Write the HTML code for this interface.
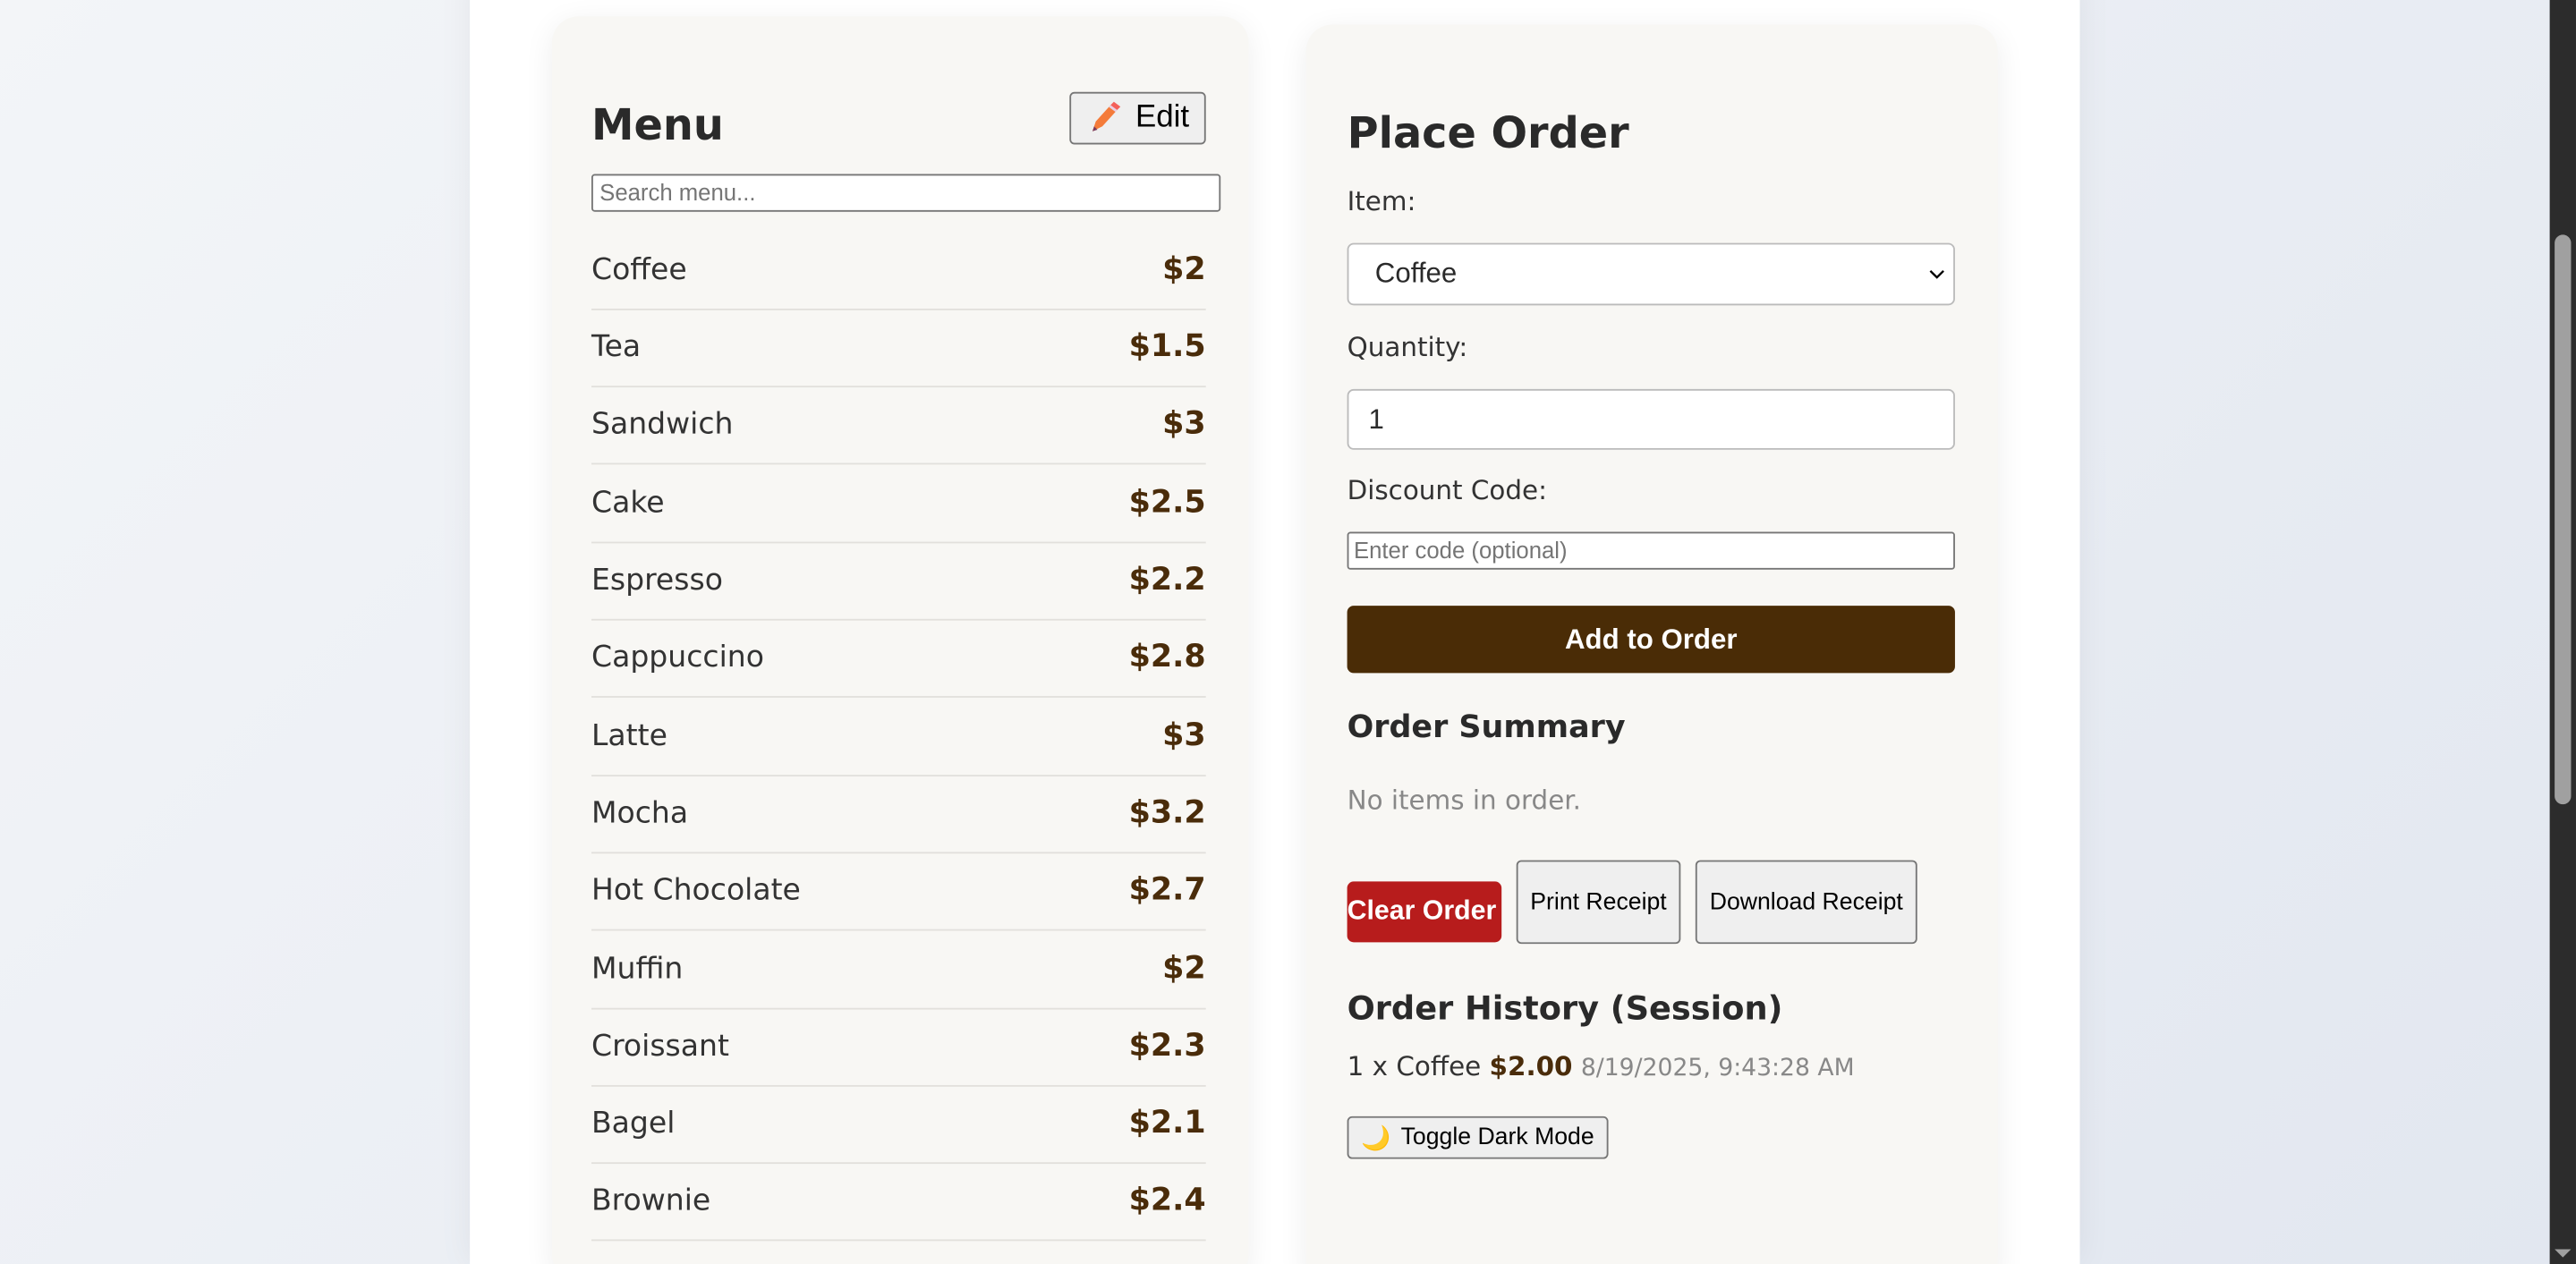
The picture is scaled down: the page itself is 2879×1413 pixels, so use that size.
<!DOCTYPE html>
<html><head><meta charset="utf-8"><style>
html,body{margin:0;padding:0;width:2879px;height:1413px;overflow:hidden;background:#eef1f6;}
#s{position:absolute;left:0;top:0;width:1568px;height:770px;transform:scale(1.83609,1.83506);transform-origin:0 0;background:linear-gradient(135deg,#f3f5f8,#e2e7f0);overflow:hidden;font-family:"DejaVu Sans","Liberation Sans",sans-serif;color:#2a2a2a;}
.a{position:absolute;white-space:nowrap;}
.wrap{position:absolute;left:286px;top:-20px;width:980px;height:790px;background:#fff;box-shadow:0 0 20px rgba(0,0,0,.06);}
.card{position:absolute;background:#f8f7f4;border-radius:16px;box-shadow:0 4px 18px rgba(0,0,0,.07);}
.row{position:absolute;left:360px;width:374px;height:47px;border-bottom:1.5px solid #e2e0dc;}
.row span{position:absolute;top:13px;font-size:18px;font-weight:normal;color:#333;}
.row b{position:absolute;right:0;top:12px;font-size:19px;color:#4a2c0a;font-weight:bold;}
.btn{position:absolute;background:#efefef;border:1px solid #767676;border-radius:3px;font-family:"Liberation Sans",sans-serif;color:#000;display:flex;align-items:center;justify-content:center;}
.lab{position:absolute;left:820px;font-size:16px;font-weight:normal;color:#333;}
.inp{position:absolute;left:820px;width:368px;background:#fff;border:1px solid #bbb;border-radius:4px;font-family:"Liberation Sans",sans-serif;}
</style></head><body><div id="s">
<div class="wrap"></div>
<div class="card" style="left:336px;top:10px;width:424px;height:770px;"></div>
<div class="card" style="left:795px;top:15px;width:421px;height:770px;"></div>

<div class="a" style="left:360px;top:62px;font-size:26px;font-weight:bold;">Menu</div>
<div class="btn" style="left:651px;top:56px;width:81px;height:30px;font-size:19px;">
<svg width="22" height="22" viewBox="0 0 22 22" style="margin-right:8px"><path d="M4 19 L6 13 L15 3 L19 6 L10 16 Z" fill="#f47b3a"/><path d="M15 3 L17 1 L21 4 L19 6 Z" fill="#f4605a"/><path d="M14 4.2 L18 7.2 L19 6 L15 3Z" fill="#e9d0e6"/><path d="M4 19 L5 16 L7 18Z" fill="#7a3b5b"/></svg>Edit</div>
<div class="a" style="left:360px;top:106px;background:#fff;border:1px solid #767676;border-radius:2px;font-family:'Liberation Sans',sans-serif;font-size:14px;color:#757575;line-height:21px;padding-left:4px;box-sizing:border-box;width:383px;height:23px;">Search menu...</div>

<div class="row" style="top:141px"><span>Coffee</span><b>$2</b></div>
<div class="row" style="top:188px"><span>Tea</span><b>$1.5</b></div>
<div class="row" style="top:235px"><span>Sandwich</span><b>$3</b></div>
<div class="row" style="top:283px"><span>Cake</span><b>$2.5</b></div>
<div class="row" style="top:330px"><span>Espresso</span><b>$2.2</b></div>
<div class="row" style="top:377px"><span>Cappuccino</span><b>$2.8</b></div>
<div class="row" style="top:425px"><span>Latte</span><b>$3</b></div>
<div class="row" style="top:472px"><span>Mocha</span><b>$3.2</b></div>
<div class="row" style="top:519px"><span>Hot Chocolate</span><b>$2.7</b></div>
<div class="row" style="top:567px"><span>Muffin</span><b>$2</b></div>
<div class="row" style="top:614px"><span>Croissant</span><b>$2.3</b></div>
<div class="row" style="top:661px"><span>Bagel</span><b>$2.1</b></div>
<div class="row" style="top:708px"><span>Brownie</span><b>$2.4</b></div>

<div class="a" style="left:820px;top:67px;font-size:26px;font-weight:bold;">Place Order</div>
<div class="lab" style="top:113px">Item:</div>
<div class="inp" style="top:148px;height:36px;font-size:17px;line-height:36px;"><span style="margin-left:16px">Coffee</span><svg style="position:absolute;right:5px;top:14px" width="10" height="8" viewBox="0 0 10 8"><path d="M1 2 L5 6 L9 2" stroke="#000" stroke-width="1.3" fill="none"/></svg></div>
<div class="lab" style="top:202px">Quantity:</div>
<div class="inp" style="top:237px;height:35px;font-size:17px;line-height:35px;"><span style="margin-left:12px">1</span></div>
<div class="lab" style="top:289px">Discount Code:</div>
<div class="inp" style="top:324px;height:21px;border-color:#767676;border-radius:2px;font-size:14px;line-height:21px;color:#757575;"><span style="margin-left:3px">Enter code (optional)</span></div>
<div class="a" style="left:820px;top:369px;width:370px;height:41px;background:#4a2c06;border-radius:4px;color:#fff;font-family:'Liberation Sans',sans-serif;font-weight:bold;font-size:17px;text-align:center;line-height:41px;">Add to Order</div>
<div class="a" style="left:820px;top:432px;font-size:19px;font-weight:bold;">Order Summary</div>
<div class="a" style="left:820px;top:478px;font-size:16px;font-weight:normal;color:#888;">No items in order.</div>
<div class="a" style="left:820px;top:537px;width:94px;height:37px;background:#b71c1c;border-radius:4px;color:#fff;font-family:'Liberation Sans',sans-serif;font-weight:bold;font-size:16.5px;line-height:37px;overflow:hidden;">Clear Order</div>
<div class="btn" style="left:923px;top:524px;width:98px;height:49px;font-size:14.5px;">Print Receipt</div>
<div class="btn" style="left:1032px;top:524px;width:133px;height:49px;font-size:14.5px;">Download Receipt</div>
<div class="a" style="left:820px;top:602px;font-size:20px;font-weight:bold;">Order History (Session)</div>
<div class="a" style="left:820px;top:640px;font-size:16px;font-weight:normal;color:#333;">1 x Coffee <b style="color:#4a2c0a;font-weight:bold">$2.00</b> <span style="color:#888;font-size:14.5px">8/19/2025, 9:43:28 AM</span></div>
<div class="btn" style="left:820px;top:680px;width:157px;height:24px;font-size:14.5px;"><span style="color:#f0a030;margin-right:6px">🌙</span>Toggle Dark Mode</div>

<div class="a" style="left:1552px;top:0;width:16px;height:770px;background:#2c2c2c;"></div>
<div class="a" style="left:1555px;top:143px;width:10px;height:347px;background:#a0a0a0;border-radius:5px;"></div>
<svg class="a" style="left:1555px;top:760px" width="10" height="7"><path d="M0 1 L10 1 L5 6Z" fill="#a0a0a0"/></svg>
</div></body></html>
